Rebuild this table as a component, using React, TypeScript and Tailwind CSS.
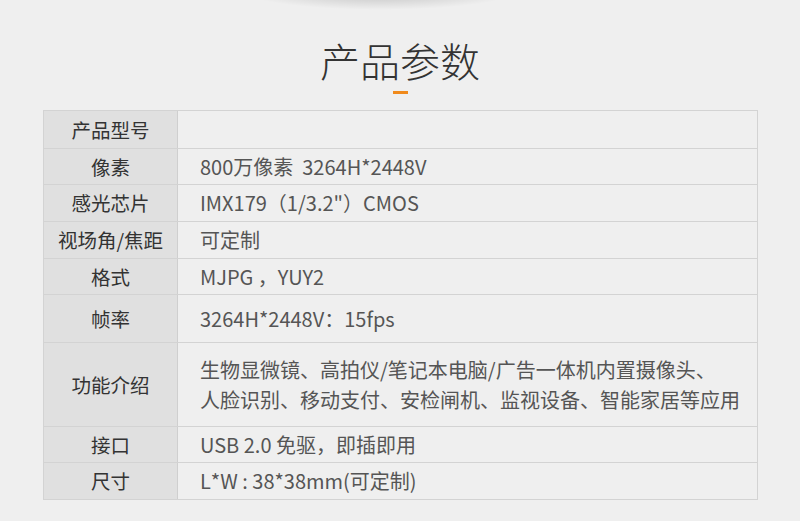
import React from 'react';

const rows: { label: string; value: React.ReactNode; h: string }[] = [
  { label: '产品型号', value: '', h: 'h-[37px]' },
  { label: '像素', value: '800万像素  3264H*2448V', h: 'h-[36px]' },
  { label: '感光芯片', value: 'IMX179（1/3.2"）CMOS', h: 'h-[37px]' },
  { label: '视场角/焦距', value: '可定制', h: 'h-[37px]' },
  { label: '格式', value: 'MJPG ，YUY2', h: 'h-[36px]' },
  { label: '帧率', value: '3264H*2448V：15fps', h: 'h-[48px]' },
  {
    label: '功能介绍',
    value: (
      <>
        生物显微镜、高拍仪/笔记本电脑/广告一体机内置摄像头、
        <br />
        人脸识别、移动支付、安检闸机、监视设备、智能家居等应用
      </>
    ),
    h: 'h-[84px]',
  },
  { label: '接口', value: 'USB 2.0 免驱，即插即用', h: 'h-[36px]' },
  { label: '尺寸', value: 'L*W : 38*38mm(可定制)', h: 'h-[37px]' },
];

export default function App() {
  return (
    <div
      className="relative w-[800px] h-[521px] overflow-hidden bg-[#efefef]"
      style={{ fontFamily: '"Noto Sans CJK SC", "Noto Sans", sans-serif' }}
    >
      {/* top shadow */}
      <div className="absolute left-[240px] top-[-30px] w-[280px] h-[40px] rounded-[50%] bg-[radial-gradient(ellipse_at_center,rgba(0,0,0,0.22),rgba(0,0,0,0)_70%)]" />

      <div className="pt-[36px] flex flex-col items-center">
        <h1 className="text-[40px] leading-[48px] font-light text-[#333]">产品参数</h1>
        <div className="mt-[7px] h-[3px] w-[15px] bg-[#f08a1c]" />
      </div>

      <div className="mt-[16px] ml-[43px] w-[715px] border border-[#d3d3d3]">
        {rows.map((r, i) => (
          <div
            key={i}
            className={`grid grid-cols-[134px_1fr] ${r.h} ${i > 0 ? 'border-t border-[#d3d3d3]' : ''}`}
          >
            <div className="flex items-center justify-center bg-[#e0e0e0] border-r border-[#cfcfcf] text-[19.5px] text-[#333]">
              {r.label}
            </div>
            <div className="flex items-center pl-[22px] bg-[#efefef] text-[20px] leading-[30px] text-[#555] whitespace-pre">
              <div>{r.value}</div>
            </div>
          </div>
        ))}
      </div>
    </div>
  );
}
